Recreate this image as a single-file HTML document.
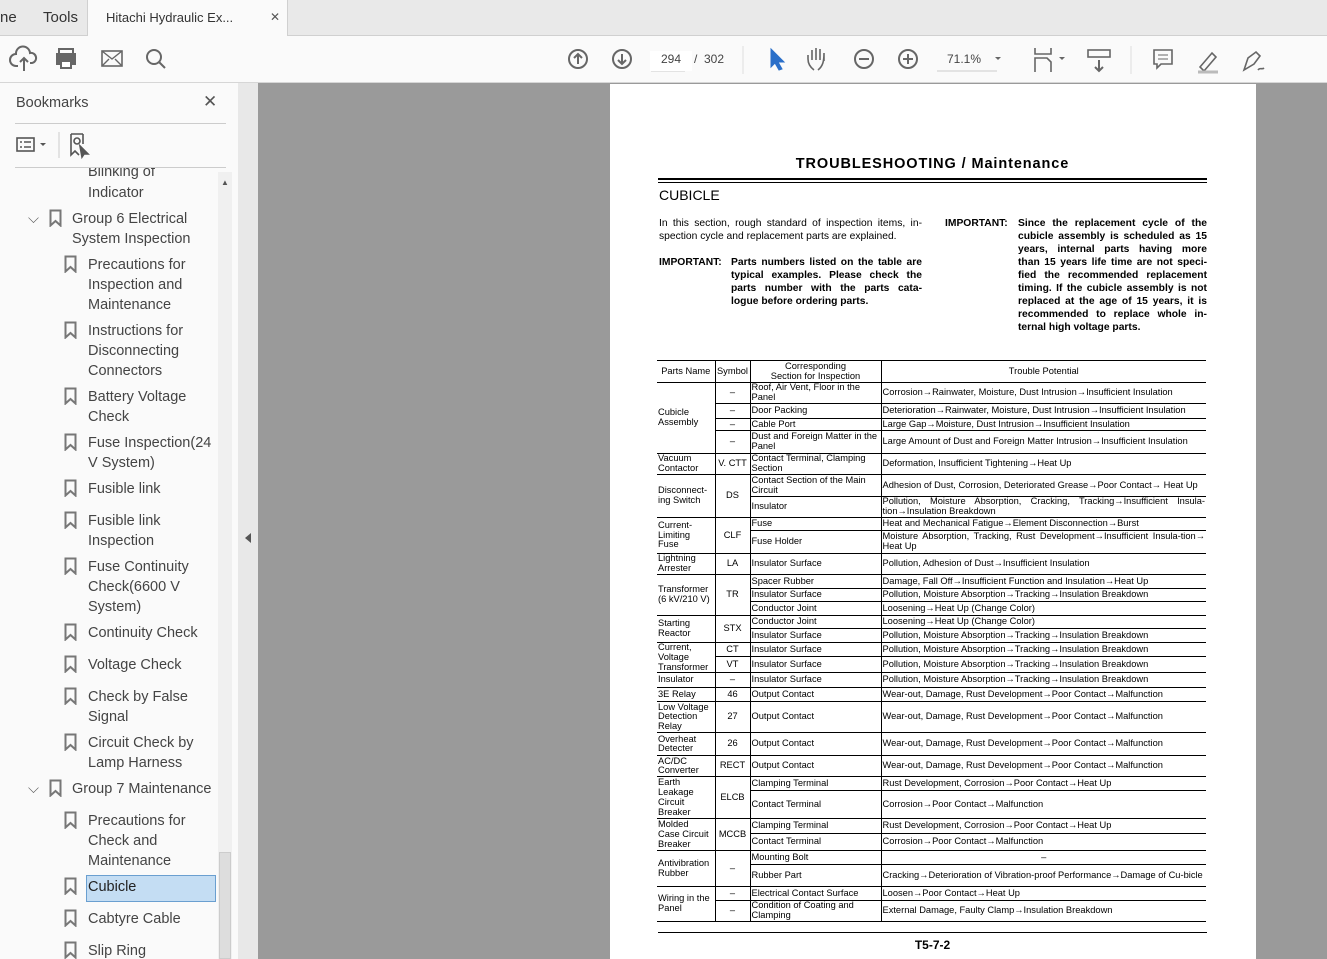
<!DOCTYPE html>
<html><head><meta charset="utf-8"><style>
*{margin:0;padding:0;box-sizing:border-box}
body{width:1327px;height:959px;overflow:hidden;background:#9a9a9a;font-family:"Liberation Sans",Arial,sans-serif;position:relative}
.abs{position:absolute}
#tabs{left:0;top:0;width:1327px;height:36px;background:#e9e9e9;border-bottom:1px solid #d0d0d0}
#tb{left:0;top:36px;width:1327px;height:47px;background:#fafafa;border-bottom:1px solid #d6d6d6}
#side{left:0;top:83px;width:238px;height:876px;background:#fafafa}
#gut{left:238px;top:83px;width:20px;height:876px;background:#e8e8e8}
#page{left:610px;top:84px;width:646px;height:875px;background:#fff}
.bm{position:absolute;font-size:14.5px;color:#444;line-height:20px;font-family:"Liberation Sans",sans-serif}
.ic{position:absolute;width:13px;height:18px}
.doc{position:absolute;color:#000;font-size:10.3px;line-height:13px}
.jl{display:block;text-align:justify;text-align-last:justify;white-space:nowrap}
.jl.l{text-align-last:left}
table{position:absolute;left:657px;top:360px;width:549px;border-collapse:collapse;table-layout:fixed;font-size:9.3px;line-height:9.8px;color:#000}
td{border-top:1px solid #000;border-bottom:1px solid #000;border-left:1px solid #000;padding:0 1px;vertical-align:middle;overflow:hidden}
td.f{border-left:none}
td.c{text-align:center}
td.j{text-align:justify}
</style></head><body>
<div id="tabs" class="abs">
 <div class="abs" style="left:0;top:9px;font-size:15px;color:#333">ne</div>
 <div class="abs" style="left:43px;top:9px;font-size:15px;color:#333">Tools</div>
</div>
<div class="abs" style="left:87px;top:0;width:201px;height:37px;background:#fafafa;border-left:1px solid #d0d0d0;border-right:1px solid #d0d0d0"></div>
<div class="abs" style="left:106px;top:10px;font-size:13px;color:#333">Hitachi Hydraulic Ex...</div>
<div class="abs" style="left:270px;top:10px;font-size:12px;color:#555">✕</div>
<div id="tb" class="abs">
 <svg class="abs" style="left:0;top:0" width="1327" height="47" fill="none" stroke="#666" stroke-width="2">
  <path d="M18 30 h-2 a6 6 0 0 1 0-12 a7 7 0 0 1 14 -1 a5 5 0 0 1 2 10 h-2 M24 35 v-13 M20 26 l4-4 4 4"/>
  <rect x="59" y="13" width="14" height="5"/><rect x="57" y="18" width="18" height="10" fill="#666"/><rect x="61" y="25" width="10" height="7" fill="#fff"/>
  <rect x="102" y="15" width="20" height="15" stroke-width="1.6"/><path d="M102 15 l10 8 10-8 M102 30 l7-7 M122 30 l-7-7" stroke-width="1.4"/>
  <circle cx="154" cy="21" r="7"/><path d="M159 26 l6 6"/>
  <circle cx="578" cy="23" r="9"/><path d="M578 28 v-10 M574 22 l4-4 4 4"/>
  <circle cx="622" cy="23" r="9"/><path d="M622 18 v10 M618 24 l4 4 4-4"/>
  <path d="M651 35 h34" stroke="#ccc" stroke-width="1"/>
  <path d="M743 10 v28" stroke="#ddd" stroke-width="1"/>
  <path d="M771 13 l0 18 4-4 4 7 3-1 -4-7 6 0z" fill="#2a6fc9" stroke="#2a6fc9" stroke-width="1"/>
  <path d="M814 34 c-4-3-6-7-6-11 v-4 M812 24 v-10 M816 24 v-12 M820 24 v-11 M824 25 v-8 c0 8-1 13-6 17" stroke-width="1.6"/>
  <circle cx="864" cy="23" r="9"/><path d="M859 23 h10"/>
  <circle cx="908" cy="23" r="9"/><path d="M903 23 h10 M908 18 v10"/>
  <path d="M937 35 h60" stroke="#ccc" stroke-width="1"/>
  <path d="M995 21 l3 3 3-3" fill="#666" stroke="none"/>
  <path d="M1035 12 v6 h16 v-6 M1035 36 v-14 h12 l4 4 v10" stroke-width="1.6"/>
  <path d="M1059 21 l3 3 3-3" fill="#666" stroke="none"/>
  <rect x="1088" y="14" width="22" height="7" stroke-width="1.6"/><path d="M1099 24 v11 M1095 31 l4 4 4-4"/>
  <path d="M1131 10 v28" stroke="#ddd" stroke-width="1"/>
  <path d="M1154 14 h18 v14 h-11 l-4 4 v-4 h-3z" stroke-width="1.6"/><path d="M1158 19 h10 M1158 23 h10" stroke-width="1"/>
  <path d="M1200 31 l12-14 4 4 -12 14z" stroke-width="1.6"/><path d="M1198 36 h20" stroke="#bbb" stroke-width="3"/>
  <path d="M1244 34 l4-12 8-6 4 4 -6 8z M1258 34 c2-3 4 0 6-2" stroke-width="1.6"/>
 </svg>
 <div class="abs" style="left:650px;top:15px;width:42px;height:20px;background:#fff;font-size:12px;color:#444;text-align:center;line-height:16px">294</div>
 <div class="abs" style="left:694px;top:16px;font-size:12px;color:#444">/ &nbsp;302</div>
 <div class="abs" style="left:947px;top:16px;font-size:12px;color:#444">71.1%</div>
</div>
<div id="side" class="abs"></div>
<div class="abs" style="left:16px;top:95px;font-size:14.5px;color:#444">Bookmarks</div>
<div class="abs" style="left:203px;top:92px;font-size:17px;color:#555">✕</div>
<div class="abs" style="left:15px;top:123px;width:211px;height:1px;background:#ccc"></div>
<div class="abs" style="left:15px;top:167px;width:211px;height:1px;background:#ccc"></div>
<svg class="abs" style="left:10px;top:130px" width="90" height="32" fill="none" stroke="#555" stroke-width="1.6">
 <rect x="7" y="8" width="17" height="13"/><path d="M10 12 h2 M14 12 h7 M10 17 h2 M14 17 h7"/>
 <path d="M30 13 l3 3 3-3" fill="#555" stroke="none"/>
 <path d="M49 2 v26" stroke="#ccc" stroke-width="1"/>
 <path d="M61 4 v21 l4-4 4 4 M73 4 h-12 M73 4 v10"/><circle cx="67" cy="11" r="3"/><path d="M70 16 l8 8 -4 0 -2 3z" fill="#555"/>
</svg>
<svg width="0" height="0" style="position:absolute"><defs><symbol id="bk" viewBox="0 0 13 18"><path d="M1.5 1.5h10v15l-5-4.5-5 4.5z" fill="none" stroke="#777" stroke-width="2"/></symbol></defs></svg>
<div class="abs" style="left:0;top:168px;width:218px;height:791px;overflow:hidden">
 <div class="bm" style="left:88px;top:-6px">Blinking of</div>
 <div class="bm" style="left:88px;top:15px">Indicator</div>
 <div class="bm" style="left:28px;top:41px;color:#555">⌵</div>
 <svg class="ic" style="left:49px;top:41px"><use href="#bk"/></svg>
 <div class="bm" style="left:72px;top:41px">Group 6 Electrical<br>System Inspection</div>
 <svg class="ic" style="left:64px;top:87px"><use href="#bk"/></svg><div class="bm" style="left:88px;top:87px">Precautions for<br>Inspection and<br>Maintenance</div>
 <svg class="ic" style="left:64px;top:153px"><use href="#bk"/></svg><div class="bm" style="left:88px;top:153px">Instructions for<br>Disconnecting<br>Connectors</div>
 <svg class="ic" style="left:64px;top:219px"><use href="#bk"/></svg><div class="bm" style="left:88px;top:219px">Battery Voltage<br>Check</div>
 <svg class="ic" style="left:64px;top:265px"><use href="#bk"/></svg><div class="bm" style="left:88px;top:265px">Fuse Inspection(24<br>V System)</div>
 <svg class="ic" style="left:64px;top:311px"><use href="#bk"/></svg><div class="bm" style="left:88px;top:311px">Fusible link</div>
 <svg class="ic" style="left:64px;top:343px"><use href="#bk"/></svg><div class="bm" style="left:88px;top:343px">Fusible link<br>Inspection</div>
 <svg class="ic" style="left:64px;top:389px"><use href="#bk"/></svg><div class="bm" style="left:88px;top:389px">Fuse Continuity<br>Check(6600 V<br>System)</div>
 <svg class="ic" style="left:64px;top:455px"><use href="#bk"/></svg><div class="bm" style="left:88px;top:455px">Continuity Check</div>
 <svg class="ic" style="left:64px;top:487px"><use href="#bk"/></svg><div class="bm" style="left:88px;top:487px">Voltage Check</div>
 <svg class="ic" style="left:64px;top:519px"><use href="#bk"/></svg><div class="bm" style="left:88px;top:519px">Check by False<br>Signal</div>
 <svg class="ic" style="left:64px;top:565px"><use href="#bk"/></svg><div class="bm" style="left:88px;top:565px">Circuit Check by<br>Lamp Harness</div>
 <div class="bm" style="left:28px;top:611px;color:#555">⌵</div>
 <svg class="ic" style="left:49px;top:611px"><use href="#bk"/></svg><div class="bm" style="left:72px;top:611px">Group 7 Maintenance</div>
 <svg class="ic" style="left:64px;top:643px"><use href="#bk"/></svg><div class="bm" style="left:88px;top:643px">Precautions for<br>Check and<br>Maintenance</div>
 <div class="abs" style="left:86px;top:707px;width:130px;height:27px;background:#c4ddf3;border:1px solid #6a9fd0"></div>
 <svg class="ic" style="left:64px;top:709px"><use href="#bk"/></svg><div class="bm" style="left:88px;top:709px;color:#222">Cubicle</div>
 <svg class="ic" style="left:64px;top:741px"><use href="#bk"/></svg><div class="bm" style="left:88px;top:741px">Cabtyre Cable</div>
 <svg class="ic" style="left:64px;top:773px"><use href="#bk"/></svg><div class="bm" style="left:88px;top:773px">Slip Ring</div>
</div>
<div class="abs" style="left:218px;top:172px;width:14px;height:787px;background:#f0f0f0"></div>
<div class="abs" style="left:221px;top:178px;font-size:8px;color:#555">▲</div>
<div class="abs" style="left:219px;top:852px;width:12px;height:107px;background:#ddd;border:1px solid #ccc"></div>
<div id="gut" class="abs"></div>
<div class="abs" style="left:245px;top:533px;width:0;height:0;border-top:5px solid transparent;border-bottom:5px solid transparent;border-right:6px solid #555"></div>
<div id="page" class="abs"></div>
<div class="doc" style="left:658px;top:158px;width:549px;text-align:center;font-weight:bold;font-size:14.5px;letter-spacing:0.9px">TROUBLESHOOTING / Maintenance</div>
<div class="abs" style="left:658px;top:178px;width:549px;height:2px;background:#000"></div>
<div class="abs" style="left:658px;top:182px;width:549px;height:1px;background:#000"></div>
<div class="doc" style="left:659px;top:189px;font-size:14px">CUBICLE</div>
<div class="doc" style="left:659px;top:217px;width:263px"><span class="jl">In this section, rough standard of inspection items, in-</span><span class="jl l">spection cycle and replacement parts are explained.</span></div>
<div class="doc" style="left:659px;top:256px;font-weight:bold">IMPORTANT:</div>
<div class="doc" style="left:731px;top:256px;width:191px;font-weight:bold"><span class="jl">Parts numbers listed on the table are</span><span class="jl">typical examples. Please check the</span><span class="jl">parts number with the parts cata-</span><span class="jl l">logue before ordering parts.</span></div>
<div class="doc" style="left:945px;top:217px;font-weight:bold">IMPORTANT:</div>
<div class="doc" style="left:1018px;top:217px;width:189px;font-weight:bold"><span class="jl">Since the replacement cycle of the</span><span class="jl">cubicle assembly is scheduled as 15</span><span class="jl">years, internal parts having more</span><span class="jl">than 15 years life time are not speci-</span><span class="jl">fied the recommended replacement</span><span class="jl">timing. If the cubicle assembly is not</span><span class="jl">replaced at the age of 15 years, it is</span><span class="jl">recommended to replace whole in-</span><span class="jl l">ternal high voltage parts.</span></div>
<table>
<colgroup><col style="width:58px"><col style="width:35px"><col style="width:131px"><col style="width:325px"></colgroup>
<tr style="height:22px"><td class="f c">Parts Name</td><td class="c">Symbol</td><td class="c">Corresponding<br>Section for Inspection</td><td class="c">Trouble Potential</td></tr>
<tr style="height:21px"><td class="f" rowspan="4">Cubicle<br>Assembly</td><td class="c">–</td><td>Roof, Air Vent, Floor in the Panel</td><td>Corrosion→Rainwater, Moisture, Dust Intrusion→Insufficient Insulation</td></tr>
<tr style="height:15px"><td class="c">–</td><td>Door Packing</td><td>Deterioration→Rainwater, Moisture, Dust Intrusion→Insufficient Insulation</td></tr>
<tr style="height:12px"><td class="c">–</td><td>Cable Port</td><td>Large Gap→Moisture, Dust Intrusion→Insufficient Insulation</td></tr>
<tr style="height:23px"><td class="c">–</td><td>Dust and Foreign Matter in the Panel</td><td>Large Amount of Dust and Foreign Matter Intrusion→Insufficient Insulation</td></tr>
<tr style="height:21px"><td class="f">Vacuum Contactor</td><td class="c">V. CTT</td><td>Contact Terminal, Clamping Section</td><td>Deformation, Insufficient Tightening→Heat Up</td></tr>
<tr style="height:22px"><td class="f" rowspan="2">Disconnect-<br>ing Switch</td><td class="c" rowspan="2">DS</td><td>Contact Section of the Main Circuit</td><td class="j">Adhesion of Dust, Corrosion, Deteriorated Grease→Poor Contact→ Heat Up</td></tr>
<tr style="height:21px"><td>Insulator</td><td class="j">Pollution, Moisture Absorption, Cracking, Tracking→Insufficient Insula-tion→Insulation Breakdown</td></tr>
<tr style="height:13px"><td class="f" rowspan="2">Current-<br>Limiting<br>Fuse</td><td class="c" rowspan="2">CLF</td><td>Fuse</td><td>Heat and Mechanical Fatigue→Element Disconnection→Burst</td></tr>
<tr style="height:23px"><td>Fuse Holder</td><td class="j">Moisture Absorption, Tracking, Rust Development→Insufficient Insula-tion→ Heat Up</td></tr>
<tr style="height:21px"><td class="f">Lightning Arrester</td><td class="c">LA</td><td>Insulator Surface</td><td>Pollution, Adhesion of Dust→Insufficient Insulation</td></tr>
<tr style="height:14px"><td class="f" rowspan="3">Transformer<br>(6 kV/210 V)</td><td class="c" rowspan="3">TR</td><td>Spacer Rubber</td><td>Damage, Fall Off→Insufficient Function and Insulation→Heat Up</td></tr>
<tr style="height:13px"><td>Insulator Surface</td><td>Pollution, Moisture Absorption→Tracking→Insulation Breakdown</td></tr>
<tr style="height:14px"><td>Conductor Joint</td><td>Loosening→Heat Up (Change Color)</td></tr>
<tr style="height:13px"><td class="f" rowspan="2">Starting<br>Reactor</td><td class="c" rowspan="2">STX</td><td>Conductor Joint</td><td>Loosening→Heat Up (Change Color)</td></tr>
<tr style="height:14px"><td>Insulator Surface</td><td>Pollution, Moisture Absorption→Tracking→Insulation Breakdown</td></tr>
<tr style="height:14px"><td class="f" rowspan="2">Current,<br>Voltage<br>Transformer</td><td class="c">CT</td><td>Insulator Surface</td><td>Pollution, Moisture Absorption→Tracking→Insulation Breakdown</td></tr>
<tr style="height:16px"><td class="c">VT</td><td>Insulator Surface</td><td>Pollution, Moisture Absorption→Tracking→Insulation Breakdown</td></tr>
<tr style="height:15px"><td class="f">Insulator</td><td class="c">–</td><td>Insulator Surface</td><td>Pollution, Moisture Absorption→Tracking→Insulation Breakdown</td></tr>
<tr style="height:14px"><td class="f">3E Relay</td><td class="c">46</td><td>Output Contact</td><td>Wear-out, Damage, Rust Development→Poor Contact→Malfunction</td></tr>
<tr style="height:31px"><td class="f">Low Voltage Detection Relay</td><td class="c">27</td><td>Output Contact</td><td>Wear-out, Damage, Rust Development→Poor Contact→Malfunction</td></tr>
<tr style="height:23px"><td class="f">Overheat Detecter</td><td class="c">26</td><td>Output Contact</td><td>Wear-out, Damage, Rust Development→Poor Contact→Malfunction</td></tr>
<tr style="height:21px"><td class="f">AC/DC Converter</td><td class="c">RECT</td><td>Output Contact</td><td>Wear-out, Damage, Rust Development→Poor Contact→Malfunction</td></tr>
<tr style="height:14px"><td class="f" rowspan="2">Earth<br>Leakage<br>Circuit<br>Breaker</td><td class="c" rowspan="2">ELCB</td><td>Clamping Terminal</td><td>Rust Development, Corrosion→Poor Contact→Heat Up</td></tr>
<tr style="height:28px"><td>Contact Terminal</td><td>Corrosion→Poor Contact→Malfunction</td></tr>
<tr style="height:15px"><td class="f" rowspan="2">Molded<br>Case Circuit<br>Breaker</td><td class="c" rowspan="2">MCCB</td><td>Clamping Terminal</td><td>Rust Development, Corrosion→Poor Contact→Heat Up</td></tr>
<tr style="height:17px"><td>Contact Terminal</td><td>Corrosion→Poor Contact→Malfunction</td></tr>
<tr style="height:14px"><td class="f" rowspan="2">Antivibration<br>Rubber</td><td class="c" rowspan="2">–</td><td>Mounting Bolt</td><td class="c">–</td></tr>
<tr style="height:22px"><td>Rubber Part</td><td class="j">Cracking→Deterioration of Vibration-proof Performance→Damage of Cu-bicle</td></tr>
<tr style="height:14px"><td class="f" rowspan="2">Wiring in the<br>Panel</td><td class="c">–</td><td>Electrical Contact Surface</td><td>Loosen→Poor Contact→Heat Up</td></tr>
<tr style="height:20px"><td class="c">–</td><td>Condition of Coating and Clamping</td><td>External Damage, Faulty Clamp→Insulation Breakdown</td></tr>
</table>
<div class="abs" style="left:658px;top:932px;width:549px;height:1px;background:#000"></div>
<div class="doc" style="left:658px;top:939px;width:549px;text-align:center;font-size:12px;font-weight:bold">T5-7-2</div>
</body></html>
